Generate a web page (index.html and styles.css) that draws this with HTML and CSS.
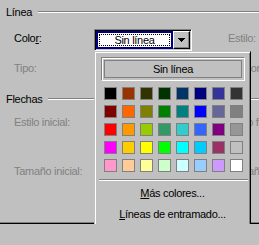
FILE: index.html
```html
<!DOCTYPE html>
<html>
<head>
  <title>Formato de autoforma</title>
  <link rel="stylesheet" href="styles.css">
</head>
<body>
  <div class="panel">
    <div class="group-title"><span>Línea</span><i class="rule"></i></div>

    <div class="row row-first">
      <label class="lbl">Colo<u>r</u>:</label>
      <div class="combo">
        <div class="field"><div class="field-box"><div class="field-text">Sin línea</div></div></div>
        <div class="drop">
          <svg width="7" height="4" viewBox="0 0 7 4" shape-rendering="crispEdges">
            <path d="M0 0h7v1H0z M1 1h5v1H1z M2 2h3v1H2z M3 3h1v1H3z" fill="#000"/>
          </svg>
        </div>
      </div>
      <label class="lbl lbl-right dim">Estilo:</label>
    </div>

    <div class="row">
      <label class="lbl dim">Tipo:</label>
      <div class="combo off"></div>
      <label class="lbl lbl-right dim">Grosor:</label>
    </div>

    <div class="group-title group-arrows"><span>Flechas</span><i class="rule"></i></div>

    <div class="row row-arrows">
      <label class="lbl dim">Estilo inicial:</label>
      <div class="combo off"></div>
      <label class="lbl lbl-right dim">Estilo final:</label>
    </div>

    <div class="row row-size">
      <label class="lbl dim">Tamaño inicial:</label>
      <div class="combo off"></div>
      <label class="lbl lbl-right dim">Tamaño final:</label>
    </div>

    <!-- color picker dropdown -->
    <div class="color-menu">
      <div class="none-btn"><span>Sin línea</span></div>
      <div class="swatches">
        <i class="swatch" style="background:#000000"></i>
        <i class="swatch" style="background:#993300"></i>
        <i class="swatch" style="background:#333300"></i>
        <i class="swatch" style="background:#003300"></i>
        <i class="swatch" style="background:#003366"></i>
        <i class="swatch" style="background:#000080"></i>
        <i class="swatch" style="background:#333399"></i>
        <i class="swatch" style="background:#333333"></i>

        <i class="swatch" style="background:#800000"></i>
        <i class="swatch" style="background:#ff6600"></i>
        <i class="swatch" style="background:#808000"></i>
        <i class="swatch" style="background:#008000"></i>
        <i class="swatch" style="background:#008080"></i>
        <i class="swatch" style="background:#0000ff"></i>
        <i class="swatch" style="background:#666699"></i>
        <i class="swatch" style="background:#808080"></i>

        <i class="swatch" style="background:#ff0000"></i>
        <i class="swatch" style="background:#ff9900"></i>
        <i class="swatch" style="background:#99cc00"></i>
        <i class="swatch" style="background:#339966"></i>
        <i class="swatch" style="background:#33cccc"></i>
        <i class="swatch" style="background:#3366ff"></i>
        <i class="swatch" style="background:#800080"></i>
        <i class="swatch" style="background:#969696"></i>

        <i class="swatch" style="background:#ff00ff"></i>
        <i class="swatch" style="background:#ffcc00"></i>
        <i class="swatch" style="background:#ffff00"></i>
        <i class="swatch" style="background:#00ff00"></i>
        <i class="swatch" style="background:#00ffff"></i>
        <i class="swatch" style="background:#00ccff"></i>
        <i class="swatch" style="background:#993366"></i>
        <i class="swatch" style="background:#c0c0c0"></i>

        <i class="swatch" style="background:#ff99cc"></i>
        <i class="swatch" style="background:#ffcc99"></i>
        <i class="swatch" style="background:#ffff99"></i>
        <i class="swatch" style="background:#ccffcc"></i>
        <i class="swatch" style="background:#ccffff"></i>
        <i class="swatch" style="background:#99ccff"></i>
        <i class="swatch" style="background:#cc99ff"></i>
        <i class="swatch" style="background:#ffffff"></i>
      </div>
      <div class="menu-sep"></div>
      <div class="menu-item first"><u>M</u>ás colores...</div>
      <div class="menu-item"><u>L</u>íneas de entramado...</div>
    </div>
  </div>
</body>
</html>
```

FILE: styles.css
```css
html, body {
  margin: 0;
  overflow: hidden;
  background: #c0c0c0;
}

body {
  font-family: "Liberation Sans", Arial, sans-serif;
  font-size: 11px;
  letter-spacing: -0.3px;
  color: #000;
}

.panel {
  position: relative;
  height: 224px;
  box-sizing: border-box;
  padding-top: 4px;
  border-bottom: 1px solid #000;
  box-shadow: inset 0 -1px 0 #808080;
}

/* Group headers */
.group-title {
  display: flex;
  align-items: center;
  gap: 6px;
  height: 16px;
  line-height: 16px;
  padding-left: 6px;
}

.group-title .rule {
  flex: 1;
  height: 0;
  border-top: 1px solid #808080;
  border-bottom: 1px solid #fff;
}

.group-arrows {
  margin-top: 10px;
}

/* Form rows */
.row {
  display: grid;
  grid-template-columns: 80px 98px 1fr;
  align-items: start;
  height: 22px;
  padding-left: 14px;
  margin-top: 8px;
}

.row-first {
  margin-top: 9px;
}

.row-arrows {
  margin-top: 6px;
}

.row-size {
  margin-top: 27px;
}

.lbl {
  line-height: 16px;
  margin-top: 1px;
  white-space: nowrap;
}

.lbl-right {
  margin-left: 36px;
}

.dim {
  color: #808080;
}

/* Combo box */
.combo {
  display: flex;
  height: 22px;
  box-sizing: border-box;
  border: 1px solid;
  border-color: #808080 #fff #fff #808080;
  box-shadow: inset 1px 1px 0 #000, inset -1px -1px 0 #c0c0c0;
  padding: 1px;
}

.field {
  width: 77px;
  box-sizing: border-box;
  background: #000080;
  padding: 2px;
}

.field-box {
  background: #fff;
  padding: 1px;
}

.field-text {
  height: 10px;
  line-height: 10px;
  border: 1px dotted #000;
  text-align: center;
}

.drop {
  width: 17px;
  box-sizing: border-box;
  border: 1px solid;
  border-color: #fff #000 #000 #fff;
  box-shadow: inset -1px -1px 0 #808080;
  display: flex;
  align-items: center;
  justify-content: center;
}

/* Color picker dropdown */
.color-menu {
  position: absolute;
  left: 94px;
  top: 51px;
  width: 157px;
  height: 178px;
  box-sizing: border-box;
  border: 1px solid;
  border-color: #c0c0c0 #000 #000 #c0c0c0;
  box-shadow: inset 1px 1px 0 #fff, inset -1px -1px 0 #808080;
  background: #c0c0c0;
  padding-top: 5px;
}

.none-btn {
  margin-left: 6px;
  width: 144px;
  height: 24px;
  box-sizing: border-box;
  border: 1px solid;
  border-color: #808080 #fff #fff #808080;
  box-shadow: inset 1px 1px 0 #fff;
  padding: 2px;
}

.none-btn span {
  display: block;
  height: 18px;
  box-sizing: border-box;
  border: 1px solid #808080;
  line-height: 16px;
  text-align: center;
}

.swatches {
  display: grid;
  grid-template-columns: repeat(8, 13px);
  grid-auto-rows: 13px;
  gap: 5px;
  margin: 6px 0 0 9px;
}

.swatch {
  box-sizing: border-box;
  border: 1px solid #808080;
}

.menu-sep {
  width: 149px;
  margin: 7px 0 0 4px;
  border-top: 1px solid #808080;
  border-bottom: 1px solid #fff;
}

.menu-item {
  height: 21px;
  line-height: 21px;
  text-align: center;
  white-space: nowrap;
}

.menu-item.first {
  margin-top: 2px;
}
```
